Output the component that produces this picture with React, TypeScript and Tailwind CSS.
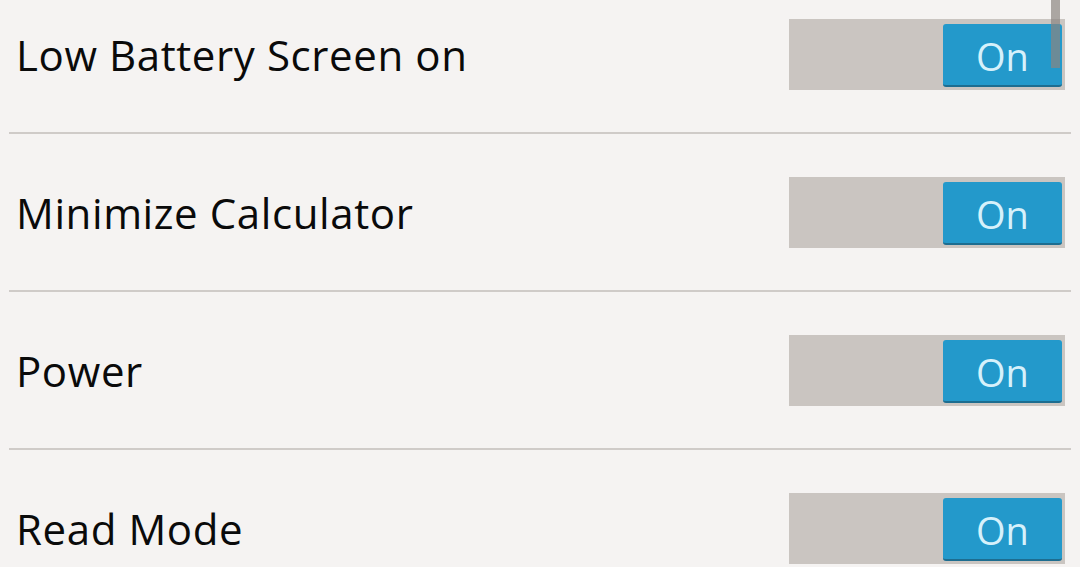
const rows = ['Low Battery Screen on', 'Minimize Calculator', 'Power', 'Read Mode'];

const Toggle = () => (
  <div className="relative h-[71px] w-[276px] bg-[#cac5c1]">
    <div className="absolute right-[3px] top-[5px] flex h-[63px] w-[119px] items-center justify-center rounded-[3px] border-b-2 border-[#1d6d90] bg-[#2399cb] pt-[3px]">
      <span className="text-[38px] leading-none text-[#d6f1fb]">On</span>
    </div>
  </div>
);

const App = () => {
  return (
    <div className="relative h-[567px] w-[1080px] overflow-hidden bg-[#f5f3f2] font-['Open_Sans',sans-serif]">
      <div className="-mt-[24px] mx-[9px]">
        {rows.map((label) => (
          <div
            key={label}
            className="flex h-[158px] items-center justify-between border-b-2 border-[#cfcbc8] pl-[7px] pr-[6px]"
          >
            <span className="text-[42px] tracking-[0.6px] text-[#0a0a0a]">{label}</span>
            <Toggle />
          </div>
        ))}
      </div>

      {/* scrollbar */}
      <div className="absolute right-[20px] top-0 h-[68px] w-[9px] bg-[#8c8580]/70" />
    </div>
  );
};

export default App;
